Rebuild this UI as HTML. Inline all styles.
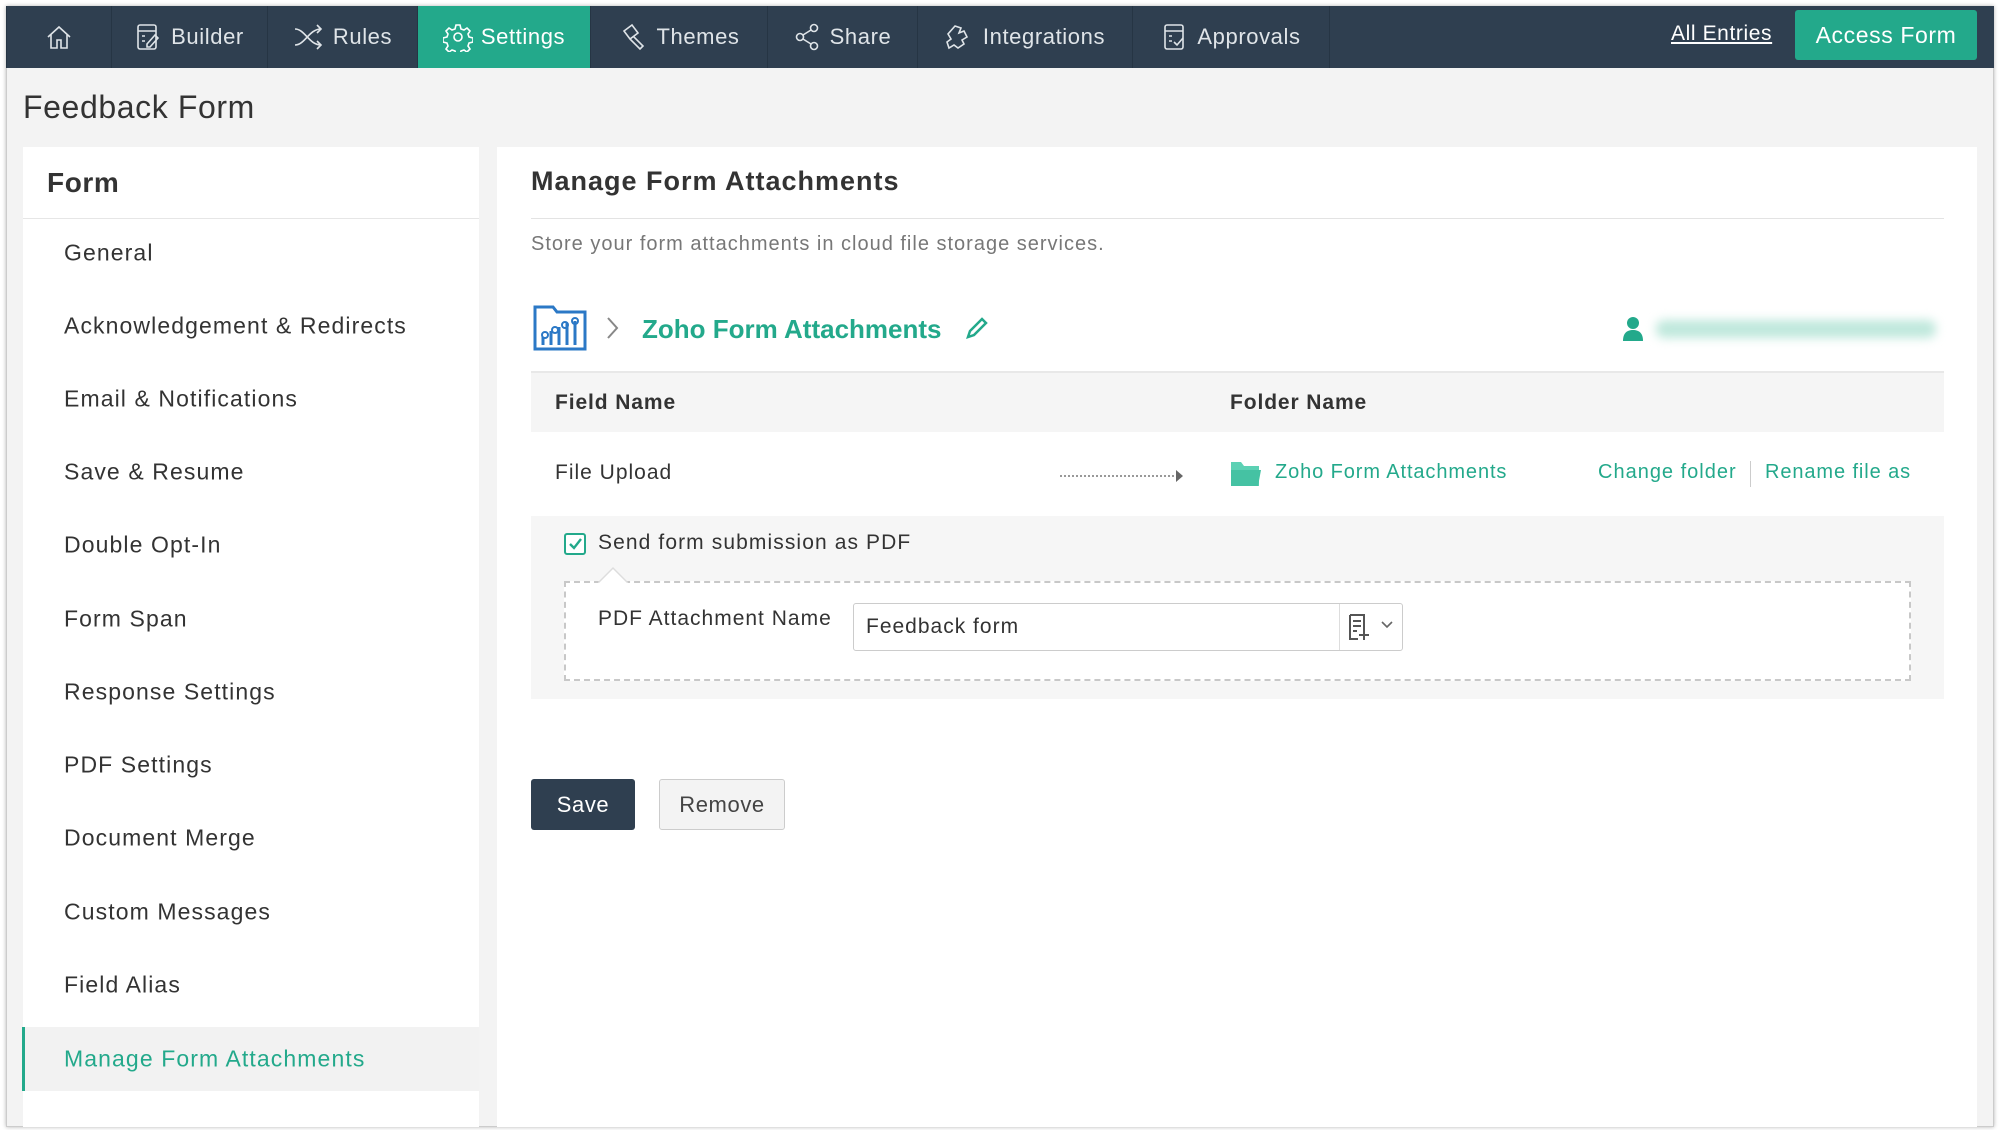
<!DOCTYPE html>
<html><head><meta charset="utf-8"><style>
*{box-sizing:border-box;margin:0;padding:0}
body{width:2000px;height:1130px;background:#fff;font-family:"Liberation Sans",sans-serif;position:relative;overflow:hidden;color:#333;letter-spacing:0.6px}
.win{position:absolute;left:6px;top:6px;width:1988px;height:1121px;background:#f3f3f3;border:1px solid #ccc;box-shadow:0 0 4px rgba(0,0,0,.3)}
.nav{position:absolute;left:6px;top:6px;width:1988px;height:62px;background:#2f3f50}
.ni{position:absolute;top:0;height:62px;display:flex;align-items:center;justify-content:center;color:#dfe4e8;font-size:22px;border-right:1px solid #263544;gap:8px}
.ni svg{stroke:#dfe4e8;fill:none;stroke-width:1.6}
.act{background:#23a98b;color:#fff}
.abs{position:absolute;white-space:nowrap}
.lp{position:absolute;left:23px;top:147px;width:456px;height:980px;background:#fff}
.rp{position:absolute;left:497px;top:147px;width:1480px;height:980px;background:#fff}
.mi{position:absolute;left:64px;font-size:23px;color:#333;transform:translateY(-50%);letter-spacing:1.1px}
.g{color:#23a98b}
</style></head><body>
<div class="win"></div>
<div class="nav">
<div class="ni" style="left:0;width:106px;border-left:1px solid #263544"><svg width="30" height="30" viewBox="0 0 30 30"><path d="M4 15L15 5l11 10M7 12v14h6v-8h4v8h6V12"/></svg></div>
<div class="ni" style="left:106px;width:156px"><svg width="28" height="30" viewBox="0 0 28 30"><rect x="3" y="3" width="18" height="24" rx="2"/><path d="M3 9h18M7 14h3M7 19h3M12 22l8-9 3 3-8 9h-3z"/></svg>Builder</div>
<div class="ni" style="left:262px;width:150px"><svg width="32" height="26" viewBox="0 0 32 26"><path d="M2 5c10 0 14 16 26 16M2 21c10 0 14-16 26-16M24 1l4 4-4 4M24 17l4 4-4 4"/></svg>Rules</div>
<div class="ni act" style="left:412px;width:173px"><svg width="30" height="30" viewBox="0 0 30 30" style="stroke:#fff"><circle cx="15" cy="15" r="4"/><path d="M13 3h4l1 4 3 1 3-2 3 3-2 3 1 3 4 1v4l-4 1-1 3 2 3-3 3-3-2-3 1-1 4h-4l-1-4-3-1-3 2-3-3 2-3-1-3-4-1v-4l4-1 1-3-2-3 3-3 3 2 3-1z"/></svg>Settings</div>
<div class="ni" style="left:585px;width:177px"><svg width="30" height="30" viewBox="0 0 30 30"><path d="M6 9l8-6 6 8-8 6zM12 17l10 10 3-3-10-10"/></svg>Themes</div>
<div class="ni" style="left:762px;width:150px"><svg width="28" height="30" viewBox="0 0 28 30"><circle cx="6" cy="15" r="3.5"/><circle cx="20" cy="6" r="3.5"/><circle cx="20" cy="24" r="3.5"/><path d="M9 13l8-5M9 17l8 5"/></svg>Share</div>
<div class="ni" style="left:912px;width:215px"><svg width="30" height="30" viewBox="0 0 30 30"><path d="M10 4l6 2-2 5 5-2 3 6-5 3 2 4-6 4-4-3-5 3-2-6 4-3-3-5z"/></svg>Integrations</div>
<div class="ni" style="left:1127px;width:197px"><svg width="28" height="30" viewBox="0 0 28 30"><rect x="4" y="3" width="18" height="24" rx="2"/><path d="M4 9h18M8 14h3M8 19h3M13 20l3 3 6-7"/></svg>Approvals</div>
</div>
<div class="abs" style="left:1671px;top:22px;font-size:21px;color:#fff;text-decoration:underline">All Entries</div>
<div class="abs" style="left:1795px;top:10px;width:182px;height:50px;background:#23a98b;border-radius:3px;color:#fff;font-size:23px;display:flex;align-items:center;justify-content:center">Access Form</div>
<div class="abs" style="left:23px;top:89px;font-size:32px;color:#333">Feedback Form</div>
<div class="lp">
<div class="abs" style="left:24px;top:20px;font-size:28px;font-weight:bold;color:#333">Form</div>
<div class="abs" style="left:0;top:71px;width:456px;height:1px;background:#e6e6e6"></div>
<div class="abs" style="left:-1px;top:880px;width:457px;height:64px;background:#f2f2f2;border-left:3px solid #23a98b"></div>
</div>
<div class="mi" style="top:253px">General</div>
<div class="mi" style="top:326px">Acknowledgement &amp; Redirects</div>
<div class="mi" style="top:399px">Email &amp; Notifications</div>
<div class="mi" style="top:472px">Save &amp; Resume</div>
<div class="mi" style="top:545px">Double Opt-In</div>
<div class="mi" style="top:619px">Form Span</div>
<div class="mi" style="top:692px">Response Settings</div>
<div class="mi" style="top:765px">PDF Settings</div>
<div class="mi" style="top:838px">Document Merge</div>
<div class="mi" style="top:912px">Custom Messages</div>
<div class="mi" style="top:985px">Field Alias</div>
<div class="mi g" style="top:1059px">Manage Form Attachments</div>
<div class="rp"></div>
<div class="abs" style="left:531px;top:166px;font-size:27px;font-weight:bold;color:#333;letter-spacing:1px">Manage Form Attachments</div>
<div class="abs" style="left:531px;top:218px;width:1413px;height:1px;background:#e3e3e3"></div>
<div class="abs" style="left:531px;top:233px;font-size:20px;color:#777;letter-spacing:1px">Store your form attachments in cloud file storage services.</div>
<svg class="abs" style="left:533px;top:303px" width="56" height="48" viewBox="0 0 56 48"><path d="M2 4h18l4 5h28v37H2z" fill="none" stroke="#2b78c6" stroke-width="3"/><path d="M10 42V34M18 42V28M26 42V24M34 42V20M42 42V18" stroke="#2b78c6" stroke-width="3"/><circle cx="12" cy="32" r="3" fill="none" stroke="#2b78c6" stroke-width="2"/><circle cx="22" cy="27" r="3" fill="none" stroke="#2b78c6" stroke-width="2"/><circle cx="32" cy="22" r="3" fill="none" stroke="#2b78c6" stroke-width="2"/><circle cx="42" cy="18" r="3" fill="none" stroke="#2b78c6" stroke-width="2"/></svg>
<svg class="abs" style="left:606px;top:316px" width="14" height="24" viewBox="0 0 14 24"><path d="M2 2l9 10-9 10" fill="none" stroke="#888" stroke-width="2"/></svg>
<div class="abs g" style="left:642px;top:314px;font-size:26px;font-weight:bold;letter-spacing:0">Zoho Form Attachments</div>
<svg class="abs" style="left:965px;top:316px" width="24" height="24" viewBox="0 0 24 24"><path d="M3 21l2-6L17 3l4 4L9 19z" fill="none" stroke="#23a98b" stroke-width="2.5"/></svg>
<svg class="abs" style="left:1622px;top:316px" width="22" height="26" viewBox="0 0 22 26"><circle cx="11" cy="7" r="6" fill="#23a98b"/><path d="M1 25c0-8 4-11 10-11s10 3 10 11z" fill="#23a98b"/></svg>
<div class="abs" style="left:1656px;top:320px;width:280px;height:18px;background:#bfe8dc;filter:blur(5px);border-radius:8px"></div>
<div class="abs" style="left:531px;top:371px;width:1413px;height:61px;background:#f5f5f5;border-top:2px solid #e8e8e8"></div>
<div class="abs" style="left:555px;top:391px;font-size:21px;font-weight:bold;color:#333;letter-spacing:0.9px">Field Name</div>
<div class="abs" style="left:1230px;top:391px;font-size:21px;font-weight:bold;color:#333;letter-spacing:0.9px">Folder Name</div>
<div class="abs" style="left:555px;top:461px;font-size:21px;color:#333;letter-spacing:1px">File Upload</div>
<div class="abs" style="left:1060px;top:475px;width:118px;border-top:2px dotted #999"></div>
<svg class="abs" style="left:1176px;top:470px" width="8" height="12"><path d="M0 0l7 6-7 6z" fill="#666"/></svg>
<svg class="abs" style="left:1231px;top:460px" width="30" height="26" viewBox="0 0 30 26"><path d="M0 2h10l3 4h15v20H0z" fill="#5cd1b4"/><path d="M0 10h30l-3 16H0z" fill="#45c2a3"/></svg>
<div class="abs g" style="left:1275px;top:461px;font-size:20px;letter-spacing:0.9px">Zoho Form Attachments</div>
<div class="abs g" style="left:1598px;top:461px;font-size:20px;letter-spacing:1px">Change folder</div>
<div class="abs" style="left:1750px;top:461px;width:1px;height:26px;background:#ccc"></div>
<div class="abs g" style="left:1765px;top:461px;font-size:20px;letter-spacing:0.9px">Rename file as</div>
<div class="abs" style="left:531px;top:516px;width:1413px;height:183px;background:#f6f6f6"></div>
<div class="abs" style="left:564px;top:533px;width:22px;height:22px;border:2px solid #23a98b;border-radius:3px;background:#fff"></div>
<svg class="abs" style="left:567px;top:536px" width="16" height="16"><path d="M3 8l4 4 7-9" fill="none" stroke="#23a98b" stroke-width="2.4"/></svg>
<div class="abs" style="left:598px;top:531px;font-size:21px;color:#333;letter-spacing:1.1px">Send form submission as PDF</div>
<div class="abs" style="left:564px;top:581px;width:1347px;height:100px;background:#fff;border:2px dashed #c8c8c8"></div>
<svg class="abs" style="left:598px;top:566px" width="30" height="17"><path d="M0 17L15 2l15 15" fill="#fff" stroke="#ddd" stroke-width="1.5"/></svg>
<div class="abs" style="left:598px;top:607px;font-size:21px;color:#333;letter-spacing:1px">PDF Attachment Name</div>
<div class="abs" style="left:853px;top:603px;width:550px;height:48px;border:1px solid #ccc;border-radius:3px;background:#fff"></div>
<div class="abs" style="left:866px;top:615px;font-size:21px;color:#333;letter-spacing:1px">Feedback form</div>
<div class="abs" style="left:1339px;top:604px;width:1px;height:46px;background:#ddd"></div>
<svg class="abs" style="left:1347px;top:613px" width="50" height="30" viewBox="0 0 50 30"><path d="M3 2h14v15M3 2v24h8M6 8h8M6 13h8M6 18h4M17 17v10M12 22h10" fill="none" stroke="#555" stroke-width="2"/><path d="M35 9l5 5 5-5" fill="none" stroke="#666" stroke-width="1.6"/></svg>
<div class="abs" style="left:531px;top:779px;width:104px;height:51px;background:#2f3f50;border-radius:3px;color:#fff;font-size:22px;display:flex;align-items:center;justify-content:center">Save</div>
<div class="abs" style="left:659px;top:779px;width:126px;height:51px;background:#f3f3f3;border:1px solid #ccc;border-radius:3px;color:#444;font-size:22px;display:flex;align-items:center;justify-content:center">Remove</div>
</body></html>
